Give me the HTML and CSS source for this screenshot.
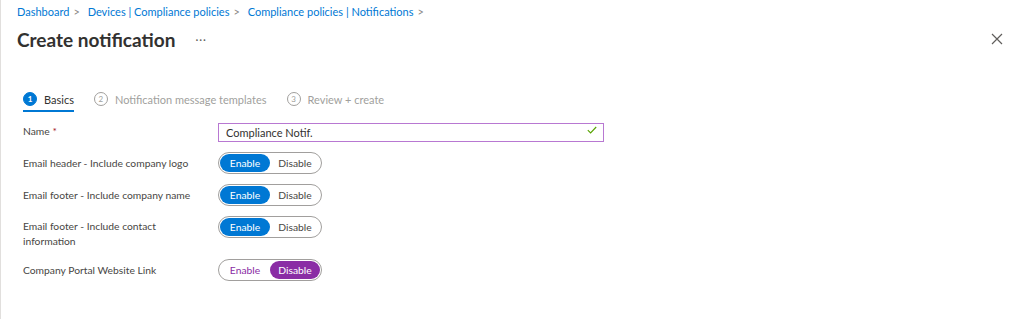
FILE: index.html
```html
<!DOCTYPE html>
<html lang="en">
  <head>
    <meta charset="UTF-8" />
    <meta name="viewport" content="width=device-width, initial-scale=1.0" />
    <title>Create notification</title>
    <link rel="stylesheet" href="styles.css">
  </head>

  <body>
    <div class="blade">
      <nav class="breadcrumb">
        <a href="#">Dashboard</a><span class="sep">&gt;</span>
        <a href="#">Devices | Compliance policies</a><span class="sep">&gt;</span>
        <a href="#">Compliance policies | Notifications</a><span class="sep">&gt;</span>
      </nav>

      <div class="blade-header">
        <h1 class="page-title">Create notification</h1>
        <span class="more">···</span>
        <button class="close-button" aria-label="Close">
          <svg width="12" height="12" viewBox="0 0 12 12">
            <path d="M1 1 L11 11 M11 1 L1 11" stroke="#605e5c" stroke-width="1.2" fill="none" />
          </svg>
        </button>
      </div>

      <div class="steps">
        <div class="step active">
          <span class="step-num">1</span>
          <span class="step-label">Basics</span>
        </div>
        <div class="step">
          <span class="step-num">2</span>
          <span class="step-label">Notification message templates</span>
        </div>
        <div class="step">
          <span class="step-num">3</span>
          <span class="step-label">Review + create</span>
        </div>
      </div>

      <form class="form">
        <div class="form-row">
          <label class="form-label">Name <span class="required">*</span></label>
          <div class="text-field">
            <input type="text" value="Compliance Notif." />
            <svg class="check" width="10" height="8" viewBox="0 0 10 8">
              <path d="M0.8 4.2 L3.6 7 L9.2 1" stroke="#57a300" stroke-width="1.1" fill="none" />
            </svg>
          </div>
        </div>

        <div class="form-row">
          <label class="form-label">Email header - Include company logo</label>
          <div class="toggle">
            <span class="option on">Enable</span>
            <span class="option">Disable</span>
          </div>
        </div>

        <div class="form-row">
          <label class="form-label">Email footer - Include company name</label>
          <div class="toggle">
            <span class="option on">Enable</span>
            <span class="option">Disable</span>
          </div>
        </div>

        <div class="form-row tall">
          <label class="form-label">Email footer - Include contact information</label>
          <div class="toggle">
            <span class="option on">Enable</span>
            <span class="option">Disable</span>
          </div>
        </div>

        <div class="form-row">
          <label class="form-label">Company Portal Website Link</label>
          <div class="toggle changed">
            <span class="option">Enable</span>
            <span class="option on">Disable</span>
          </div>
        </div>
      </form>
    </div>
  </body>
</html>
```

FILE: styles.css
```css
/* Page and blade frame */
body {
  margin: 0;
  background-color: #ffffff;
  font-family: "Segoe UI", Lato, sans-serif;
  color: #323130;
}

.blade {
  height: 319px;
  box-sizing: border-box;
  border-left: 1px solid #e1dfdd;
  padding: 4px 20px 0 16px;
}

/* Breadcrumb */
.breadcrumb {
  font-size: 11px;
  line-height: 16px;
  height: 16px;
}

.breadcrumb a {
  color: #0078d4;
  text-decoration: none;
}

.breadcrumb .sep {
  color: #8a8886;
  margin: 0 5px 0 4px;
}

/* Title row */
.blade-header {
  display: flex;
  align-items: center;
  height: 32px;
  margin-top: 3px;
}

.page-title {
  margin: 0;
  font-size: 19px;
  font-weight: 700;
  color: #323130;
}

.more {
  margin-left: 20px;
  font-size: 11px;
  color: #605e5c;
  letter-spacing: 1px;
}

.close-button {
  margin-left: auto;
  border: none;
  background: none;
  padding: 0;
  width: 14px;
  height: 14px;
  display: flex;
  align-items: center;
  justify-content: center;
}

/* Wizard steps */
.steps {
  display: flex;
  margin-top: 34px;
  margin-left: 6px;
  gap: 20px;
}

.step {
  display: flex;
  align-items: center;
  gap: 7px;
  height: 20px;
  padding-bottom: 1px;
  border-bottom: 2px solid transparent;
  font-size: 11px;
  color: #a19f9d;
}

.step.active {
  border-bottom-color: #0078d4;
  color: #323130;
}

.step-num {
  width: 12px;
  height: 12px;
  border: 1px solid #a19f9d;
  border-radius: 50%;
  font-size: 8px;
  line-height: 12px;
  text-align: center;
}

.step.active .step-num {
  background-color: #0078d4;
  border-color: #0078d4;
  color: white;
  font-weight: bold;
}

/* Form rows */
.form {
  margin-left: 6px;
  margin-top: 9px;
}

.form-row {
  display: flex;
  align-items: center;
  min-height: 20px;
  margin-bottom: 10px;
}

.form-row.tall {
  align-items: flex-start;
  margin-bottom: 10px;
}

.form-row.tall .form-label {
  padding-top: 3px;
}

.form-label {
  width: 180px;
  margin-right: 15px;
  font-size: 10.3px;
  line-height: 15px;
  color: #484644;
}

.required {
  color: #a4262c;
}

.text-field {
  position: relative;
  width: 386px;
}

.text-field input {
  width: 100%;
  height: 19px;
  box-sizing: border-box;
  border: 1px solid #b878d2;
  border-radius: 0;
  padding: 0 7px;
  font-family: inherit;
  font-size: 11px;
  color: #323130;
  outline: none;
}

.text-field .check {
  position: absolute;
  right: 7px;
  top: 5px;
}

/* Enable / Disable pill toggle */
.toggle {
  display: flex;
  width: 104px;
  height: 22px;
  box-sizing: border-box;
  border: 1px solid #a19f9d;
  border-radius: 11px;
  padding: 1px;
}

.option {
  flex: 1;
  border-radius: 9px;
  font-size: 10.3px;
  line-height: 18px;
  text-align: center;
  color: #484644;
}

.option.on {
  background-color: #0078d4;
  color: white;
}

.toggle.changed .option {
  color: #8a2da5;
}

.toggle.changed .option.on {
  background-color: #8a2da5;
  color: white;
}
```
